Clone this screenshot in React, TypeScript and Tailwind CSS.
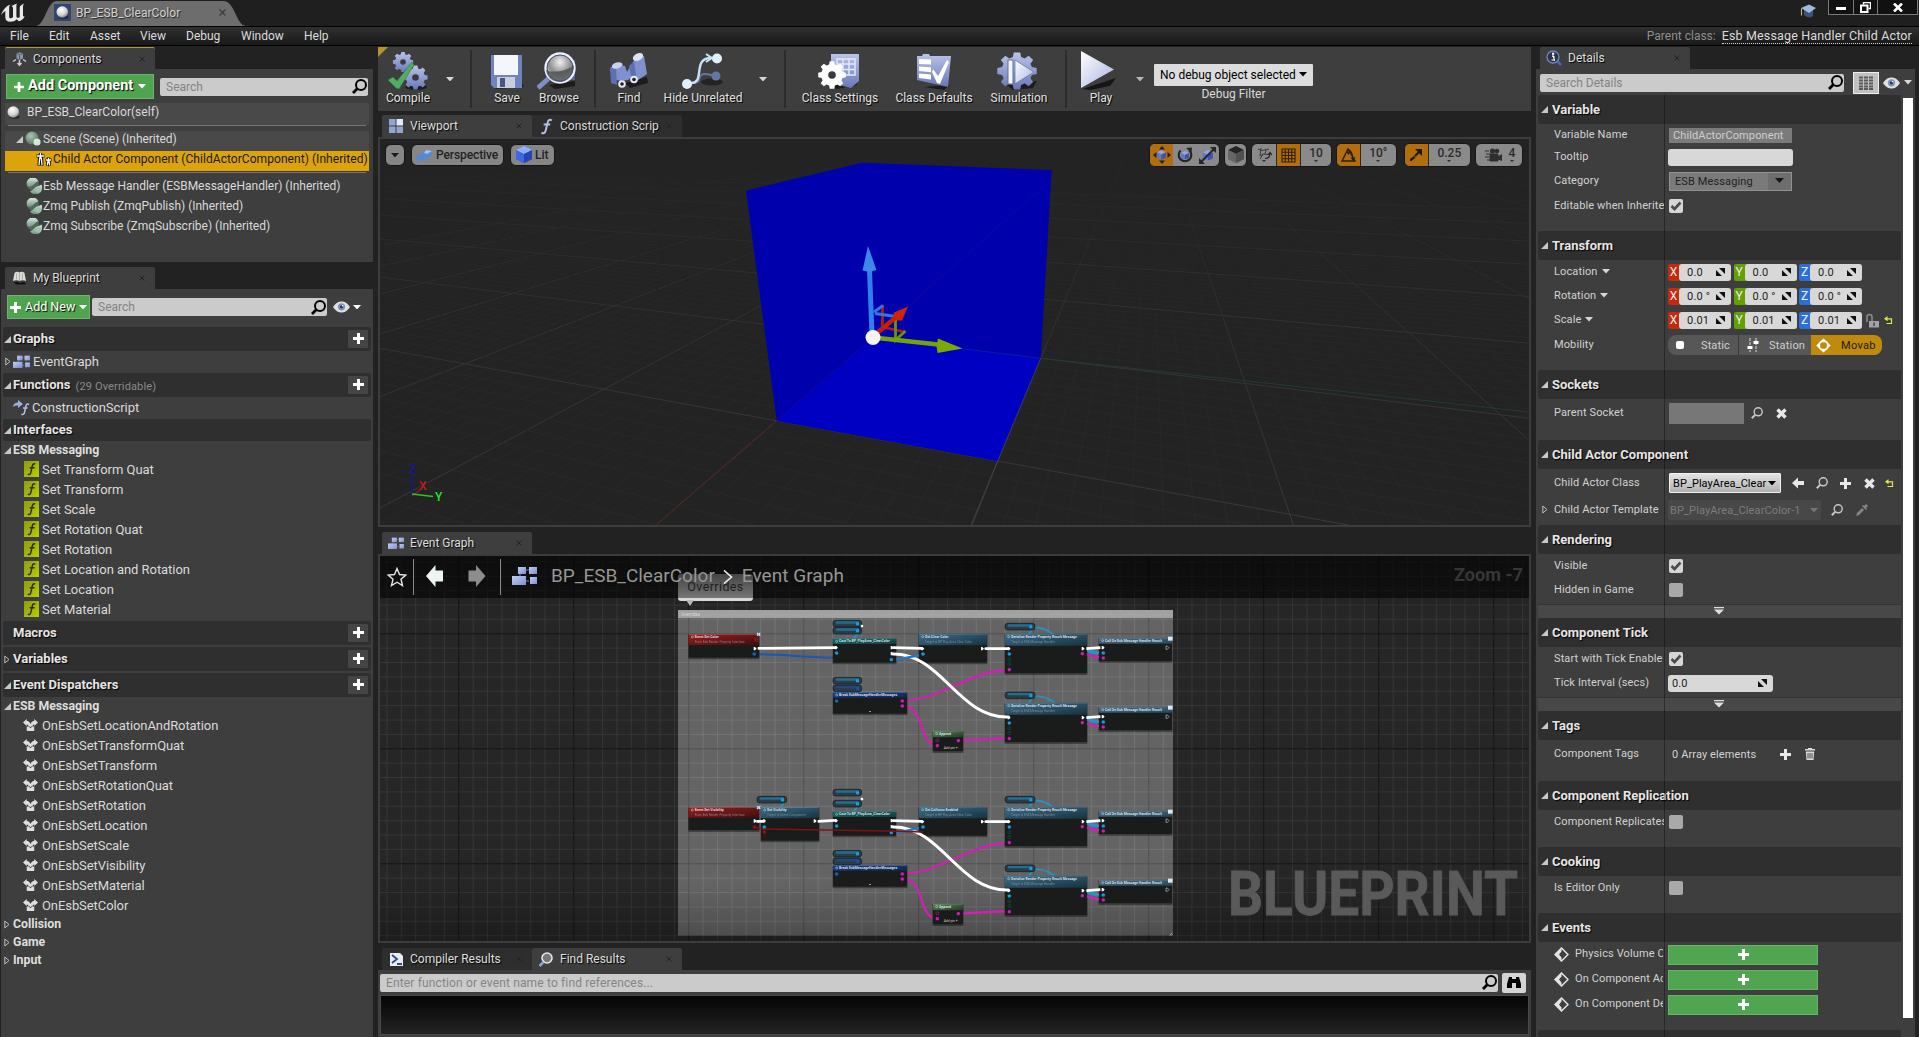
import React from "react";

type Kids = { children?: React.ReactNode };

const shadow = "[text-shadow:1px_1px_1px_#000]";

/* ---------- small glyphs ---------- */

const Caret = ({ c = "#d8d8d8", w = 9 }: { c?: string; w?: number }) => (
  <svg width={w} height={w * 0.56} viewBox="0 0 9 5" className="shrink-0">
    <path d="M0 0h9L4.5 5z" fill={c} />
  </svg>
);

const Open = () => (
  <svg width="7" height="7" viewBox="0 0 7 7" className="shrink-0">
    <path d="M7 0v7H0z" fill="#c8c8c8" />
  </svg>
);

const Closed = () => (
  <svg width="6" height="9" viewBox="0 0 6 9" className="shrink-0">
    <path d="M.8 1v7L5 4.5z" fill="none" stroke="#bdbdbd" />
  </svg>
);

const Plus = ({ s = 11, c = "#fff" }: { s?: number; c?: string }) => (
  <svg width={s} height={s} viewBox="0 0 11 11" className="shrink-0">
    <path d="M4 0h3v4h4v3H7v4H4V7H0V4h4z" fill={c} />
  </svg>
);

const Cross = ({ s = 11 }: { s?: number }) => (
  <svg width={s} height={s} viewBox="0 0 11 11" className="shrink-0">
    <path d="M1.5 1.5l8 8M9.5 1.5l-8 8" stroke="#e8e8e8" strokeWidth="3.4" />
  </svg>
);

const Glass = ({ s = 15, c = "#000", sw = 2 }: { s?: number; c?: string; sw?: number }) => (
  <svg width={s} height={s} viewBox="0 0 15 15" className="shrink-0">
    <circle cx="9" cy="6" r="5" fill="none" stroke={c} strokeWidth={sw} />
    <path d="M5.2 9.8L1 14" stroke={c} strokeWidth={sw * 1.4} />
  </svg>
);

const Eye = () => (
  <svg width="17" height="12" viewBox="0 0 17 12" className="shrink-0">
    <path d="M0 6C3 1.5 6 .5 8.500 .5S14 1.500 17 6c-3 4.500-6 5.500-8.500 5.500S3 10.500 0 6z" fill="#dfe0e6" />
    <circle cx="8.500" cy="5.800" r="3.600" fill="#7f92b8" />
    <circle cx="8.500" cy="5.800" r="1.600" fill="#28344f" />
    <circle cx="9.500" cy="4.800" r=".8" fill="#fff" />
  </svg>
);

const GraphIcon = ({ w = 17 }: { w?: number }) => (
  <svg width={w} height={w * 0.8} viewBox="0 0 25 20" className="shrink-0">
    <defs>
      <linearGradient id="gi" x1="0" y1="0" x2="1" y2="1">
        <stop offset="0" stopColor="#c3cdf2" />
        <stop offset="1" stopColor="#7f8fcf" />
      </linearGradient>
    </defs>
    <path d="M12 4h5M12 15h5M8 8v3" stroke="#7080b8" />
    <rect x="6" y="1" width="8" height="7" fill="url(#gi)" />
    <rect x="17" y="1" width="8" height="7" fill="url(#gi)" />
    <rect x="0" y="10" width="14" height="9" fill="url(#gi)" />
    <rect x="18" y="11" width="7" height="7" fill="url(#gi)" />
  </svg>
);

const FnTile = () => (
  <svg width="15" height="16" viewBox="0 0 15 16" className="shrink-0">
    <defs>
      <linearGradient id="ft" x1="0" y1="0" x2="1" y2="1">
        <stop offset="0" stopColor="#8f9a12" />
        <stop offset="1" stopColor="#b9cf00" />
      </linearGradient>
    </defs>
    <rect width="15" height="16" fill="url(#ft)" />
    <path d="M11.300 3.200C9.500 2 8.600 3.400 8.200 5.300L6.800 11.600C6.400 13.500 5.400 14 3.900 13.100M5.600 6.700h5" fill="none" stroke="#2c3004" strokeWidth="1.500" />
  </svg>
);

const FnIcon = ({ s = 16 }: { s?: number }) => (
  <svg width={s} height={s} viewBox="0 0 16 16" className="shrink-0">
    <path d="M13 2.300C10.800.6 9.600 2 9 4.600L7.300 11.500C6.700 14.200 5.400 15 3.300 13.900M5.300 6.200h6.200" fill="none" stroke="#b4c0ea" strokeWidth="1.900" />
  </svg>
);

const Dispatcher = () => (
  <svg width="15" height="12" viewBox="0 0 14 11" className="shrink-0">
    <path d="M0 3.200L3.500 0v1.500C5.600 1.800 6.500 3 7 4.600 7.500 3 8.400 1.800 10.500 1.500V0L14 3.200 10.500 6.400V5C9.500 5 9 5.800 8.700 6.800h1.800V11h-7V6.800h1.800C5 5.800 4.500 5 3.500 5v1.400z" fill="#dedede" />
    <path d="M5.600 6.600L7 8.200l1.400-1.600" fill="none" stroke="#3e3e3e" strokeWidth=".9" />
  </svg>
);

const Ball = ({ s = 13 }: { s?: number }) => (
  <svg width={s} height={s} viewBox="0 0 13 13" className="shrink-0">
    <defs>
      <radialGradient id="ball" cx=".4" cy=".3" r=".75">
        <stop offset="0" stopColor="#fff" />
        <stop offset=".6" stopColor="#d4d4d4" />
        <stop offset="1" stopColor="#777" />
      </radialGradient>
    </defs>
    <ellipse cx="7.500" cy="11" rx="5" ry="1.800" fill="#1a1a1a" opacity=".7" />
    <circle cx="6.300" cy="6" r="5.800" fill="url(#ball)" />
  </svg>
);

const SceneIcon = () => (
  <svg width="17" height="16" viewBox="0 0 17 16" className="shrink-0">
    <defs>
      <radialGradient id="sc" cx=".4" cy=".35" r=".7">
        <stop offset="0" stopColor="#a9c8b2" />
        <stop offset="1" stopColor="#557262" />
      </radialGradient>
    </defs>
    <circle cx="7" cy="7" r="6.500" fill="url(#sc)" />
    <circle cx="12" cy="11" r="3.600" fill="#cdebd5" />
  </svg>
);

const CompIcon = () => (
  <svg width="16" height="16" viewBox="0 0 16 16" className="shrink-0">
    <defs>
      <linearGradient id="ci" x1="0" y1="0" x2="0" y2="1">
        <stop offset="0" stopColor="#dcebe0" />
        <stop offset="1" stopColor="#6f8f7c" />
      </linearGradient>
    </defs>
    <circle cx="7" cy="6.500" r="6" fill="#50685a" />
    <path d="M1 7.500A6 6 0 0 1 12.500 3.500C9 3.800 8.500 7 5 8.500 3 9.300 1.500 9 1 7.500z" fill="url(#ci)" />
    <path d="M15.300 6.500A6.200 6.200 0 0 1 4 13.200c3-.2 4-3.200 6.500-4.400 2-.9 4-.9 4.800-2.300z" fill="url(#ci)" />
    <circle cx="12.500" cy="12" r="2.800" fill="#9fc0ab" />
  </svg>
);

const ChildIcon = () => (
  <svg width="16" height="15" viewBox="0 0 16 15" className="shrink-0">
    <g fill="none" stroke="#111" strokeWidth="3.200">
      <path d="M.5 4h8M4.500 1v6M3 13.500l.5-7h2l.5 7" />
      <path d="M9.500 8h6M12.500 5.500v4M11.500 14l.5-5h1l.5 5" />
    </g>
    <g fill="none" stroke="#fff" strokeWidth="1.300">
      <path d="M.8 4h7.400M4.500 1v6M3 13l.7-7h1.600l.7 7" />
      <path d="M10 8h5M12.500 6v3M11.300 13.500l.8-5h.8l.8 5" />
    </g>
  </svg>
);

const DragIcon = () => (
  <svg width="9" height="8" viewBox="0 0 9 8" className="shrink-0">
    <path d="M3 0h6v6zM0 2v6h6z" fill="#111" />
  </svg>
);

const Reset = () => (
  <svg width="9" height="9" viewBox="0 0 9 9" className="shrink-0">
    <path d="M3.500 0L0 2.800l3.500 2.500z" fill="#e2e64a" />
    <path d="M2 2.800h5.500v4.700H2.500" fill="none" stroke="#e2e64a" strokeWidth="1.200" />
  </svg>
);

/* ---------- shared pieces ---------- */

const Tab = ({ icon, label, active = true, accent = false }: { icon: React.ReactNode; label: string; active?: boolean; accent?: boolean }) => (
  <div
    className={
      "flex h-[22px] w-[150px] shrink-0 items-center rounded-t-[2px] pl-[6px] pr-[10px] " +
      (active ? "bg-[#3e3e3e] " : "bg-[#2e2e2e] ") +
      (accent ? "border-t border-[#b09a28]" : "")
    }
  >
    <span className="flex w-[16px] shrink-0 items-center justify-center">{icon}</span>
    <span className={"ml-[6px] whitespace-nowrap text-[12px] text-[#dedede] " + shadow}>{label}</span>
    <svg width="6" height="6" viewBox="0 0 6 6" className="ml-auto shrink-0">
      <path d="M.5.5l5 5M5.500.5l-5 5" stroke="#222" strokeWidth="1" />
    </svg>
  </div>
);

const SearchBox = ({ text, cls }: { text: string; cls: string }) => (
  <div className={"flex h-[18px] items-center rounded-[2px] bg-[#cbcbcb] pl-[6px] pr-[1px] " + cls}>
    <span className="text-[12px] text-[#848484]">{text}</span>
    <span className="ml-auto flex">
      <Glass />
    </span>
  </div>
);

/* ---------- title and menu ---------- */

const TitleBar = () => (
  <div className="flex h-[26px] shrink-0 items-start bg-[#1f1f1f]">
    <svg width="24" height="22" viewBox="0 0 24 22" className="ml-[1px] mt-[2px] shrink-0">
      <path
        d="M0 13C2 8 6 3 9.500 2.500 8 4 8.200 5 8.200 7v8c0 1.500 1.800 1.700 3.800.2V6.500c0-1.500-.5-2-1.500-2.500C13 3 14.500 2 16 1.500c-.6 1.200-.6 2-.6 4v8.500c0 2 1.500 2.300 3.300 1.200V5.500c0-1.500 2.500-3.500 4.300-4-1 1.300-1 2.500-1 4v8.500c.5.500 1 .5 1.800.2-1.300 3-4 4.600-6 5.100l-2-2c-1.300 1.700-4 2.500-6.500 2.500-3 0-5-1.500-5-4.500V9C2.800 10 1.500 11 0 13z"
        fill="#e8e8e8"
      />
    </svg>
    <div className="relative ml-[11px] mt-[1px] h-[25px] w-[210px]">
      <svg width="210" height="25" viewBox="0 0 210 25" className="absolute inset-0">
        <path d="M0 25C9 24 11 1 20 0H188C199 1 200 24 210 25z" fill="#6d6d6d" />
      </svg>
      <div className="relative flex h-[23px] items-center pl-[18px]">
        <span className="flex h-[17px] w-[17px] items-center justify-center bg-[#33456f]">
          <Ball />
        </span>
        <span className="ml-[5px] text-[12px] tracking-[.05px] text-[#d2d2d2] [text-shadow:1px_1px_1px_#222]">BP_ESB_ClearColor</span>
        <svg width="7" height="7" viewBox="0 0 7 7" className="ml-auto mr-[20px]">
          <path d="M.5.5l6 6M6.500.5l-6 6" stroke="#3a3a3a" strokeWidth="1.200" />
        </svg>
      </div>
    </div>
    <svg width="18" height="17" viewBox="0 0 18 17" className="ml-auto mt-[4px] shrink-0">
      <path d="M4 6v5c3 3 7 3 9 1V6z" fill="#3f5378" />
      <path d="M1 4l8-3.500L16 4l-7 5z" fill="#9dbbe0" />
      <path d="M1.500 4.500v7" stroke="#c9a86a" strokeWidth="1.200" />
    </svg>
    <div className="ml-[10px] mr-[1px] flex h-[15px] border border-t-0 border-[#7a7a7a]">
      <span className="flex w-[25px] items-center justify-center border-r border-[#7a7a7a] bg-[#111]">
        <span className="mt-[2px] h-[3px] w-[10px] bg-white" />
      </span>
      <span className="flex w-[24px] items-center justify-center border-r border-[#7a7a7a] bg-[#111]">
        <svg width="11" height="11" viewBox="0 0 11 11">
          <path d="M3.500 2.500v-2h7v6h-2" fill="none" stroke="#fff" strokeWidth="1.400" />
          <rect x="1" y="3.500" width="6.500" height="6.500" fill="none" stroke="#fff" strokeWidth="2" />
        </svg>
      </span>
      <span className="flex w-[39px] items-center justify-center bg-[#111]">
        <svg width="10" height="9" viewBox="0 0 10 9">
          <path d="M1 .5l8 8M9 .5l-8 8" stroke="#fff" strokeWidth="2.600" />
        </svg>
      </span>
    </div>
  </div>
);

const menu: [string, string][] = [
  ["File", "w-[39px]"],
  ["Edit", "w-[41px]"],
  ["Asset", "w-[50px]"],
  ["View", "w-[46px]"],
  ["Debug", "w-[55px]"],
  ["Window", "w-[63px]"],
  ["Help", "w-[40px]"],
];

const MenuBar = () => (
  <div className="flex h-[20px] shrink-0 items-center border-y border-black bg-gradient-to-b from-[#303030] to-[#191919] pl-[10px] pr-[7px] text-[12px] text-[#dcdcdc]">
    {menu.map(([m, w]) => (
      <span key={m} className={w}>
        {m}
      </span>
    ))}
    <span className="ml-auto text-[12px] text-[#8f8f8f]">Parent class:</span>
    <span className="ml-[6px] border-b border-dotted border-[#cfcfcf] text-[12.500px] leading-[14px] tracking-[.15px]">Esb Message Handler Child Actor</span>
  </div>
);

/* ---------- left column ---------- */

const Components = () => (
  <div className="flex flex-col">
    <div className="flex pl-[5px]">
      <Tab
        accent
        label="Components"
        icon={
          <svg width="15" height="14" viewBox="0 0 15 14">
            <path d="M4.500 1.500l3-1.200 3.500 1v5.200L7.500 8 4.500 6.500z" fill="#8b95a6" />
            <path d="M1 9.500l3-2M14 9.500l-3-2M7.500 8v5M5.500 11l2 2.300 2-2.300" stroke="#c8ccd6" strokeWidth="1.500" fill="none" />
            <path d="M4.500 1.500l3 1 3.500-1.200M7.500 2.500V8" stroke="#4a5468" strokeWidth=".8" fill="none" />
          </svg>
        }
      />
    </div>
    <div className="ml-[1px] h-[193px] w-[372px] bg-[#3e3e3e] px-[4px] pt-[5px]">
      <div className="flex items-center">
        <div className="ml-px flex h-[25px] w-[148px] items-center border border-[#6cb56c] bg-[#50a450] pl-[7px]">
          <Plus s={10} />
          <span className={"ml-[4px] whitespace-nowrap text-[14.500px] font-bold text-white " + shadow}>Add Component</span>
          <span className="ml-[5px] flex">
            <Caret c="#fff" w={8} />
          </span>
        </div>
        <SearchBox text="Search" cls="ml-[6px] w-[208px]" />
      </div>
      <div className="mt-[4px] flex h-[22px] items-center bg-[#494949] pl-[2px] pb-[4px] text-[12px] tracking-[.03px] text-[#dadada]">
        <Ball />
        <span className="ml-[7px]">BP_ESB_ClearColor(self)</span>
      </div>
      <div className="mx-[3px] h-px bg-[#767676]" />
      <div className="mt-[5px] flex h-[20px] items-center bg-[#494949] pb-[4px] pl-[11px] text-[12px] text-[#dadada]">
        <Open />
        <span className="ml-[2px] flex">
          <SceneIcon />
        </span>
        <span className="ml-px tracking-[-.05px]">Scene (Scene) (Inherited)</span>
      </div>
      <div className="flex h-[20px] w-[364px] items-center bg-[#dca30a] pb-[4px] pl-[31px] text-[12px] tracking-[.055px] text-[#181818]">
        <ChildIcon />
        <span className="ml-px whitespace-nowrap">Child Actor Component (ChildActorComponent) (Inherited)</span>
      </div>
      <div className="mx-[3px] mt-px mb-[3px] h-px bg-[#767676]" />
      {["Esb Message Handler (ESBMessageHandler) (Inherited)", "Zmq Publish (ZmqPublish) (Inherited)", "Zmq Subscribe (ZmqSubscribe) (Inherited)"].map((t) => (
        <div key={t} className="flex h-[20px] items-center pl-[21px] text-[12px] tracking-[-.01px] text-[#dadada]">
          <CompIcon />
          <span className="ml-px whitespace-nowrap">{t}</span>
        </div>
      ))}
    </div>
  </div>
);

const Header = ({ label, h = "h-[24px]", arrow, plus = true, note }: { label: string; h?: string; arrow?: React.ReactNode; plus?: boolean; note?: string }) => (
  <div className={"flex items-center rounded-[2px] bg-[#2f2f2f] pl-px pr-[3px] " + h}>
    <span className="flex w-[9px] items-center">{arrow}</span>
    <span className={"pb-px text-[13px] font-bold text-[#e6e6e6] " + shadow}>{label}</span>
    {note && <span className="ml-[5px] pt-[2px] text-[11px] tracking-[.15px] text-[#8a8a8a]">{note}</span>}
    {plus && (
      <span className="mb-px ml-auto flex h-[18px] w-[20px] items-center justify-center rounded-[1px] bg-[#454545]">
        <Plus />
      </span>
    )}
  </div>
);

const Sub = ({ label, open, h }: { label: string; open?: boolean; h: string }) => (
  <div className={"flex items-center pl-px " + h}>
    <span className="flex w-[9px] items-center">{open ? <Open /> : <Closed />}</span>
    <span className="text-[12.300px] font-bold text-[#dedede]">{label}</span>
  </div>
);

const fns = ["Set Transform Quat", "Set Transform", "Set Scale", "Set Rotation Quat", "Set Rotation", "Set Location and Rotation", "Set Location", "Set Material"];
const evs = [
  "OnEsbSetLocationAndRotation",
  "OnEsbSetTransformQuat",
  "OnEsbSetTransform",
  "OnEsbSetRotationQuat",
  "OnEsbSetRotation",
  "OnEsbSetLocation",
  "OnEsbSetScale",
  "OnEsbSetVisibility",
  "OnEsbSetMaterial",
  "OnEsbSetColor",
];

const MyBlueprint = () => (
  <div className="mt-[5px] flex min-h-0 grow flex-col">
    <div className="flex pl-[5px]">
      <Tab
        label="My Blueprint"
        icon={
          <svg width="15" height="14" viewBox="0 0 15 14">
            <path d="M1 10L2.500 2C4 .5 6 .5 7.500 1.500 9 .5 11 .5 12.500 2L14 10c-2-1-5-1-6.500 0C6 9 3 9 1 10z" fill="#dcdcd6" />
            <path d="M2 11.500c2-1 4-1 5.500.5 2-1 4-1 6-.500v2H4z" fill="#111" />
            <path d="M7.500 2v8M4.500 2.500v6M10.500 2.500v6" stroke="#9f9f9f" strokeWidth=".8" />
          </svg>
        }
      />
    </div>
    <div className="ml-[1px] w-[372px] grow bg-[#3e3e3e] px-[2px] pt-[6px]">
      <div className="flex h-[24px] items-center">
        <div className="ml-[4px] flex h-[24px] w-[83px] items-center border border-[#6cb56c] bg-[#50a450] pl-[2px]">
          <Plus />
          <span className={"ml-[4px] whitespace-nowrap text-[12.500px] text-white " + shadow}>Add New</span>
          <span className="ml-[4px] flex">
            <Caret c="#fff" w={8} />
          </span>
        </div>
        <SearchBox text="Search" cls="ml-[2px] w-[235px]" />
        <span className="ml-[6px] flex">
          <Eye />
        </span>
        <span className="ml-[3px] flex">
          <Caret c="#fff" w={8} />
        </span>
      </div>
      <div className="mt-[8px] w-[368px]">
        <Header label="Graphs" arrow={<Open />} />
        <div className="flex h-[22px] items-center pb-px pl-[2px] text-[13px] tracking-[-.05px] text-[#dadada]">
          <span className="flex w-[8px]">
            <Closed />
          </span>
          <GraphIcon />
          <span className="ml-[3px]">EventGraph</span>
        </div>
        <Header label="Functions" arrow={<Open />} note="(29 Overridable)" />
        <div className="flex h-[22px] items-center pb-px pl-[10px] text-[13px] tracking-[-.05px] text-[#dadada]">
          <svg width="17" height="16" viewBox="0 0 17 16">
            <path d="M0 7C.5 3.500 3 2.500 5 2.500V0l5 4-5 4V5.500C3 5.500 1.500 5.800 0 7z" fill="#9fb0dc" />
            <path d="M16 4.500c-2-1.200-2.800.2-3.200 2l-1.200 5.500c-.5 2.200-1.500 3-3.200 2.200M10 8h4.500" fill="none" stroke="#b4c0ea" strokeWidth="1.500" />
          </svg>
          <span className="ml-[2px]">ConstructionScript</span>
        </div>
        <Header label="Interfaces" h="h-[22px]" arrow={<Open />} plus={false} />
        <Sub label="ESB Messaging" open h="h-[18px]" />
        {fns.map((f) => (
          <div key={f} className="flex h-[20px] items-center pl-[21px] text-[13px] tracking-[-.05px] text-[#dadada]">
            <FnTile />
            <span className="ml-[3px]">{f}</span>
          </div>
        ))}
        <div className="mt-[2px] flex flex-col gap-[2px]">
          <Header label="Macros" />
          <Header label="Variables" arrow={<Closed />} />
          <Header label="Event Dispatchers" arrow={<Open />} />
        </div>
        <Sub label="ESB Messaging" open h="h-[18px]" />
        {evs.map((f) => (
          <div key={f} className="flex h-[20px] items-center pl-[20px] text-[13px] tracking-[-.08px] text-[#dadada]">
            <Dispatcher />
            <span className="ml-[4px]">{f}</span>
          </div>
        ))}
        <Sub label="Collision" h="h-[18px]" />
        <Sub label="Game" h="h-[18px]" />
        <Sub label="Input" h="h-[18px]" />
      </div>
    </div>
  </div>
);

/* ---------- toolbar ---------- */

const gear = "M-2-10h4l.6 3 2.200.9 2.500-1.700 2.800 2.800-1.700 2.500.9 2.200 3 .6v4l-3 .6-.9 2.200 1.700 2.500-2.800 2.800-2.500-1.700-2.200.9-.6 3h-4l-.6-3-2.200-.9-2.500 1.700-2.800-2.800 1.700-2.500-.9-2.200-3-.6v-4l3-.6.9-2.200-1.700-2.500 2.800-2.800 2.500 1.700 2.200-.9z";

const Gear = ({ x, y, s, f }: { x: number; y: number; s: number; f: string }) => (
  <g transform={`translate(${x} ${y}) scale(${s})`}>
    <path d={gear} transform="translate(0 -2.300)" fill={f} />
    <circle r="3.400" fill="#3a3a3a" />
  </g>
);

const Defs = () => (
  <defs>
    <linearGradient id="bl" x1="0" y1="0" x2="0" y2="1">
      <stop offset="0" stopColor="#b9c4ea" />
      <stop offset="1" stopColor="#6878b6" />
    </linearGradient>
    <linearGradient id="wh" x1="0" y1="0" x2="1" y2="1">
      <stop offset="0" stopColor="#ffffff" />
      <stop offset="1" stopColor="#a9b4e0" />
    </linearGradient>
    <radialGradient id="lens" cx=".5" cy=".3" r=".7">
      <stop offset="0" stopColor="#f2f2f2" />
      <stop offset=".55" stopColor="#8d8d8d" />
      <stop offset="1" stopColor="#e6e6e6" />
    </radialGradient>
  </defs>
);

const Tool = ({ label, w, children }: { label: string; w: string } & Kids) => (
  <div className={"flex h-[63px] shrink-0 flex-col items-center pt-[3px] " + w}>
    <svg width="44" height="40" viewBox="0 0 44 40" className="shrink-0">
      <Defs />
      {children}
    </svg>
    <span className={"whitespace-nowrap text-[12px] leading-[14px] text-[#e2e2e2] " + shadow}>{label}</span>
  </div>
);

const Sep = ({ m }: { m: string }) => <div className={"h-[58px] w-[2px] shrink-0 bg-[#2c2c2c] " + m} />;

const Toolbar = () => (
  <div className="relative flex h-[64px] shrink-0 items-center bg-[#3e3e3e]">
    <svg width="10" height="10" className="absolute left-0 top-0">
      <path d="M0 0h10L0 10z" fill="#b8922a" />
    </svg>
    <Tool label="Compile" w="w-[60px]">
      <ellipse cx="30" cy="36" rx="11" ry="3" fill="#1e1e1e" />
      <Gear x={17} y={11} s={0.82} f="url(#bl)" />
      <Gear x={29.500} y={26.500} s={0.98} f="url(#bl)" />
      <path d="M2 29l5-3 4 4 15-19 2 3-15 24-3-1z" fill="#4fae62" stroke="#2d6e3c" strokeWidth=".5" />
    </Tool>
    <span className="flex w-[24px] justify-center">
      <Caret w={8} />
    </span>
    <Sep m="ml-[8px]" />
    <Tool label="Save" w="ml-[9px] w-[52px]">
      <path d="M36 30l3 6-30 2z" fill="#1e1e1e" />
      <path d="M6 4h31v33H9l-3-3z" fill="#6f83be" />
      <rect x="9" y="4" width="24" height="20" fill="#f4f6fb" />
      <rect x="12" y="26" width="18" height="11" fill="#c9cddd" />
      <rect x="15" y="27" width="5" height="9" fill="#4a5682" />
    </Tool>
    <Tool label="Browse" w="w-[52px]">
      <path d="M12 34l26-4v5l-20 3z" fill="#1c1c1c" />
      <path d="M9 9h29v20H9z" fill="#56638c" />
      <path d="M11 28L1 37" stroke="#7f90c4" strokeWidth="5" />
      <circle cx="23" cy="17" r="14.500" fill="url(#lens)" stroke="#eef1fb" strokeWidth="2.400" />
      <path d="M9 19c6 3 20 2 28-5 0 9-6 17-14 17S10 26 9 19z" fill="#4a4a4a" opacity=".75" />
      <circle cx="23" cy="17" r="13" fill="none" stroke="#41507e" />
    </Tool>
    <Sep m="ml-[9px]" />
    <Tool label="Find" w="ml-[9px] w-[48px]">
      <path d="M18 32l22-6 1 6-18 5z" fill="#1c1c1c" />
      <path d="M3 17l7-4 8 2 2 6 4-7 5-8 8-1 3 18-9 6-6-3-4 3-7 1-9-2z" fill="#7f92cf" />
      <path d="M3 17l1 15 6 2-1-18zM22 15l3 14 5 1-3-20z" fill="#5d70b2" />
      <ellipse cx="10" cy="14.500" rx="5.500" ry="3" fill="#c8d2f2" transform="rotate(-15 10 14)" />
      <ellipse cx="31" cy="6" rx="5.500" ry="3.500" fill="#dfe3ee" transform="rotate(-25 31 6)" />
      <circle cx="15" cy="33" r="3.800" fill="#e4e8f4" />
      <circle cx="15" cy="33" r="1.800" fill="#222" />
      <circle cx="27" cy="28.500" r="3.800" fill="#e4e8f4" />
      <circle cx="27" cy="28.500" r="1.800" fill="#222" />
    </Tool>
    <Tool label="Hide Unrelated" w="ml-[2px] w-[96px]">
      <ellipse cx="31" cy="31" rx="11" ry="3.500" fill="#242424" />
      <path d="M10 32c14 0 4-9 14-9s6 3 12 3" stroke="#66779f" strokeWidth="2" fill="none" />
      <circle cx="35" cy="25" r="4.500" fill="#5f78a6" />
      <path d="M8 32c18 2 2-25 22-25" stroke="#c9e2fa" strokeWidth="2.400" fill="none" />
      <path d="M25 3l6 4-6 4" stroke="#c9e2fa" strokeWidth="2" fill="none" />
      <circle cx="36" cy="7.500" r="5" fill="#dff1ff" />
      <circle cx="6" cy="33" r="5" fill="#dff1ff" />
    </Tool>
    <span className="flex w-[24px] justify-center">
      <Caret w={8} />
    </span>
    <Sep m="ml-[9px]" />
    <Tool label="Class Settings" w="ml-[7px] w-[94px]">
      <path d="M14 34l24-4 1 4-20 4z" fill="#1c1c1c" />
      <path d="M13 3h28v27l-8 7-20-5z" fill="url(#bl)" />
      <path d="M19 8h18v16H19zM25 8v16M31 8v16M19 13h18M19 18.500h18" fill="none" stroke="#e5eaf8" strokeWidth="1.400" />
      <Gear x={14} y={24} s={1.12} f="#fff" />
    </Tool>
    <Tool label="Class Defaults" w="w-[94px]">
      <path d="M12 36l26-2-6 5z" fill="#1c1c1c" />
      <path d="M5 5h5l1-2h6l1 2h21l-3 31L5 29z" fill="url(#bl)" />
      <path d="M7 8l12 .500v5L7 13zM7 15.500l12 .700v5L7 20zM7 22.500l12 1v5L7 27z" fill="#fff" />
      <path d="M21 18l5 7 9-16 2 2-9 22-3-1-5-11z" fill="#fff" />
    </Tool>
    <Tool label="Simulation" w="w-[76px]">
      <path d="M10 34l30-4-4 7-20 2z" fill="#1c1c1c" />
      <g transform="translate(20 20) scale(1.600 1.500)">
        <path d={gear} transform="translate(0 -2.300)" fill="url(#bl)" />
      </g>
      <rect x="11" y="9" width="5" height="24" fill="#f4f6fb" stroke="#60709c" />
      <path d="M18 9l19 12-19 12z" fill="url(#wh)" stroke="#60709c" strokeWidth=".7" />
    </Tool>
    <Sep m="ml-[8px]" />
    <Tool label="Play" w="ml-[5px] w-[58px]">
      <path d="M3 38l34-11-6 8-20 4z" fill="#161616" />
      <path d="M2 0v37l33-18.500z" fill="url(#wh)" />
    </Tool>
    <span className="flex w-[20px] justify-center">
      <Caret c="#b8b8b8" w={8} />
    </span>
    <div className="ml-[4px] flex flex-col items-center pt-[6px]">
      <div className="flex h-[22px] w-[159px] items-center rounded-[1px] bg-[#dcdcdc] pl-[6px] text-[12px] text-black">
        <span className="whitespace-nowrap">No debug object selected</span>
        <span className="ml-[3px] flex">
          <Caret c="#000" w={8} />
        </span>
      </div>
      <span className="mt-[1px] text-[12px] leading-[14px] text-[#dadada]">Debug Filter</span>
    </div>
  </div>
);

/* ---------- viewport ---------- */

const P = (u: number, v: number): [number, number] => {
  const w = 1 - 0.2587 * u - 0.0903 * v;
  return [(-297.2 * u + 73.7 * v + 873) / w, (-25.8 * u - 11.75 * v + 337.7) / w];
};

type Seg = { a: [number, number]; b: [number, number]; major: boolean };
const segs: Seg[] = [];
for (let i = -60; i <= 100; i++) {
  const v = i / 10;
  segs.push({ a: P(-40, v), b: P((0.94 - 0.0903 * v) / 0.2587, v), major: i % 10 === 0 });
}
for (let i = -60; i <= 36; i++) {
  const u = i / 10;
  segs.push({ a: P(u, -40), b: P(u, (0.94 - 0.2587 * u) / 0.0903), major: i % 10 === 0 });
}

const pill = "flex h-[22px] items-center rounded-[6px] border border-[#151515] bg-[#868686]";

const Scene = () => (
  <svg viewBox="380 139 1149 386" className="absolute inset-0 h-full w-full">
    <defs>
      <linearGradient id="fade" x1="0" y1="0" x2="0" y2="1">
        <stop offset="0" stopColor="#fff" stopOpacity=".05" />
        <stop offset=".12" stopColor="#fff" stopOpacity=".2" />
        <stop offset=".5" stopColor="#fff" stopOpacity=".7" />
        <stop offset="1" stopColor="#fff" />
      </linearGradient>
      <mask id="fm">
        <rect x="380" y="139" width="1149" height="386" fill="url(#fade)" />
      </mask>
    </defs>
    <rect x="380" y="139" width="1149" height="386" fill="#232323" />
    <g mask="url(#fm)">
      {segs.map((s, i) => (
        <line key={i} x1={s.a[0]} y1={s.a[1]} x2={s.b[0]} y2={s.b[1]} stroke={s.major ? "#3a3a3a" : "#2b2b2b"} strokeWidth={s.major ? 1 : 0.8} />
      ))}
    </g>
    <path d="M746 190.700L861.700 162.700 1051.700 170 1040.700 358.300 997.700 461 776.700 420.700z" fill="#0000ad" />
    <path d="M873 337.700L1040.700 358.300 997.700 461 776.700 420.700z" fill="#0000c3" />
    <path d="M776.700 420.700L873 337.700 1051 180" fill="none" stroke="#1e0a8c" strokeWidth=".7" />
    <path d="M776.700 420.700L656 525" stroke="#5a2424" strokeWidth=".9" />
    <path d="M873 337.700L1040.700 358.300" stroke="#082a9a" strokeWidth=".7" />
    <path d="M1040.700 358.300L1529 412" stroke="#25402a" strokeWidth=".9" />
    <path d="M1040.700 358.300L997.700 461 972 525" stroke="#45484c" strokeWidth=".8" fill="none" />
    <g fill="none" strokeWidth="2.800">
      <path d="M882.500 305v22l22 5" stroke="#b81c05" />
      <path d="M874 312l9-6.500M875 313.500l21 3" stroke="#2f78e0" />
      <path d="M895.500 317v23l10-9" stroke="#6c9400" />
    </g>
    <path d="M876 334l20-17" stroke="#c02004" strokeWidth="4.500" />
    <path d="M894 312.500l14-6-6 14-5 0-4-4z" fill="#d02505" />
    <path d="M872 335l-2.500-65" stroke="#2f80ea" strokeWidth="5" />
    <path d="M868 246l8.500 24-7 2-7-1.500z" fill="#3b87ea" />
    <path d="M878 338l60 6.500" stroke="#76a207" strokeWidth="4.500" />
    <path d="M938 338.500l24.500 10-25 4.500-1-7z" fill="#7ea80a" />
    <circle cx="873" cy="337.500" r="7.500" fill="#f4f4f4" />
    <path d="M412 496V476" stroke="#1414a0" strokeWidth="1.500" />
    <path d="M412 496l9-7" stroke="#a01818" strokeWidth="1.500" />
    <path d="M412 494l21 2.500" stroke="#28c828" strokeWidth="1.500" />
    <g fontFamily="Roboto, sans-serif" fontSize="12" fontWeight="500">
      <text x="409" y="474" fill="#1616a8">Z</text>
      <text x="419" y="490" fill="#c01c1c">X</text>
      <text x="435" y="501" fill="#30e030">Y</text>
    </g>
  </svg>
);

const VBtn = ({ w, on, children, first, val }: { w: string; on?: boolean; first?: boolean; val?: string } & Kids) => (
  <span className={"relative flex h-full items-center justify-center " + w + (on ? " bg-[#b26d0e]" : "") + (first ? "" : " border-l border-[#2a2a2a]")}>
    {val && <span className="pb-[5px] text-[12px] font-medium text-[#2a2a2a]">{val}</span>}
    {children}
    {val && (
      <span className="absolute bottom-[4px] flex">
        <Caret c="#333" w={4} />
      </span>
    )}
  </span>
);

const VGroup = ({ m, children }: { m: string } & Kids) => (
  <div className={"flex h-[24px] items-center overflow-hidden rounded-[6px] border border-[#161616] bg-[#8a8a8a] " + m}>{children}</div>
);

const Cube = ({ s = 9, a = "#8fa4ea", b = "#5d76cf", c = "#3c54b0" }: { s?: number; a?: string; b?: string; c?: string }) => (
  <svg width={s} height={s * 1.08} viewBox="0 0 12 13" className="shrink-0">
    <path d="M0 3l6-3 6 3-6 3z" fill={a} />
    <path d="M0 3l6 3v7L0 10z" fill={b} />
    <path d="M12 3L6 6v7l6-3z" fill={c} />
  </svg>
);

const Viewport = () => (
  <div className="relative h-[390px] shrink-0 border-2 border-[#3c3c3c] bg-[#232323]">
    <Scene />
    <div className="relative flex items-start pl-[5px] pr-[6px] pt-[4px]">
      <div className={pill + " mt-px w-[20px] justify-center"}>
        <Caret c="#1c1c1c" w={8} />
      </div>
      <div className={pill + " ml-[6px] mt-px w-[93px] gap-[4px] pl-[5px]"}>
        <svg width="15" height="12" viewBox="0 0 15 12" className="shrink-0">
          <path d="M0 7l7-3 2-3 6 1-1 5-5 2-4 3-5-1z" fill="#4d8ae0" />
          <path d="M9 1l6 1-5 3-3-1z" fill="#9cc4f8" />
        </svg>
        <span className="text-[12px] font-medium tracking-[-.1px] text-[#222]">Perspective</span>
      </div>
      <div className={pill + " ml-[6px] mt-px w-[45px] gap-[3px] pl-[5px]"}>
        <Cube s={16} a="#8db0ff" b="#3f66e6" c="#2743b8" />
        <span className="text-[12px] font-medium text-[#222]">Lit</span>
      </div>
      <VGroup m="ml-auto w-[71px]">
        <VBtn w="w-[23px]" on first>
          <svg width="18" height="18" viewBox="0 0 18 18" className="absolute">
            <path d="M9 0l3 3.500H6zM9 18l3-3.500H6zM0 9l3.500-3v6zM18 9l-3.500-3v6z" fill="#222" />
          </svg>
          <Cube />
        </VBtn>
        <VBtn w="w-[23px]" first>
          <svg width="16" height="16" viewBox="0 0 16 16" className="absolute">
            <path d="M3.500 3.500a6.300 6.300 0 1 0 9 0" fill="none" stroke="#262626" strokeWidth="2.200" />
            <path d="M9 1l6-.5-.5 5.500z" fill="#262626" />
          </svg>
          <Cube s={8} />
        </VBtn>
        <VBtn w="w-[23px]" first>
          <svg width="17" height="17" viewBox="0 0 17 17" className="absolute">
            <path d="M17 0v6L11 0zM0 17v-6l6 6z" fill="#262626" />
            <path d="M2 15L15 2" stroke="#262626" strokeWidth="2" />
          </svg>
          <Cube s={10} />
        </VBtn>
      </VGroup>
      <VGroup m="ml-[4px] w-[23px] justify-center">
        <Cube s={16} a="#242424" b="#666" c="#505050" />
      </VGroup>
      <VGroup m="ml-[4px] w-[81px]">
        <VBtn w="w-[24px]" first>
          <svg width="15" height="14" viewBox="0 0 15 14" className="mb-[3px]">
            <path d="M1 2l4 1.500L12 2M4 1L3 9l3-2 6 .5M6 7L3 12M9 3L8 7.500" fill="none" stroke="#3a3a3a" />
            <path d="M8 11.500c3 0 5-2 5-5M11 8l2-2.500L15 8" fill="none" stroke="#222" strokeWidth="1.200" />
          </svg>
          <span className="absolute bottom-[4px] flex">
            <Caret c="#333" w={4} />
          </span>
        </VBtn>
        <VBtn w="w-[24px]" on>
          <svg width="15" height="15" viewBox="0 0 15 15">
            <path d="M1 1h13v13H1zM4.250 1v13M7.500 1v13M10.750 1v13M1 4.250h13M1 7.500h13M1 10.750h13" fill="none" stroke="#2a2010" strokeWidth="1.100" />
          </svg>
        </VBtn>
        <VBtn w="w-[31px]" val="10" />
      </VGroup>
      <VGroup m="ml-[4px] w-[61px]">
        <VBtn w="w-[23px]" on first>
          <svg width="15" height="15" viewBox="0 0 15 15">
            <path d="M1 13h13L7 1zM7 1c3 2 5 6 5 11" fill="none" stroke="#2a2010" strokeWidth="1.400" />
            <path d="M9.500 9.500l5 0-2 4zM5 4l4-1-1 4z" fill="#2a2010" />
          </svg>
        </VBtn>
        <VBtn w="w-[37px]" val="10°" />
      </VGroup>
      <VGroup m="ml-[7px] w-[67px]">
        <VBtn w="w-[23px]" on first>
          <svg width="14" height="14" viewBox="0 0 14 14">
            <path d="M6 1h7v7zM5 8l1.500 1.500L2.500 13H1v-2z" fill="#1f180c" />
            <path d="M6 8l5-5" stroke="#1f180c" strokeWidth="2.200" />
          </svg>
        </VBtn>
        <VBtn w="w-[43px]" val="0.25" />
      </VGroup>
      <VGroup m="ml-[4px] w-[48px]">
        <VBtn w="w-[28px] pl-[6px]" first>
          <svg width="17" height="14" viewBox="0 0 17 14">
            <circle cx="7.500" cy="3" r="2.600" fill="#2e2e2e" />
            <circle cx="12" cy="3" r="2.300" fill="#2e2e2e" />
            <path d="M5 6h8v7H5zM13 9l4-2.500v6L13 11zM0 3h4M1 6h4M0 9h4M2 12h4" fill="#2e2e2e" stroke="#2e2e2e" />
          </svg>
        </VBtn>
        <VBtn w="w-[16px]" first val="4" />
      </VGroup>
    </div>
  </div>
);

/* ---------- graph ---------- */

type NodeT = [number, number, number, number, string, number, string, string?];

const Node = ({ n }: { n: NodeT }) => {
  const [x, y, w, h, color, hh, t, sub] = n;
  return (
    <g>
      <rect x={x - 2} y={y + 1} width={w + 4} height={h + 4} rx="4" fill="#000" opacity=".35" />
      <rect x={x} y={y} width={w} height={h} rx="3" fill="#191c1b" />
      <rect x={x} y={y} width={w} height={hh} rx="3" fill={`url(#${color})`} />
      <rect x={x + 1} y={y} width={w - 2} height="2" fill="#cfdde0" opacity=".35" />
      <circle cx={x + 11} cy={y + 9} r="3" fill="none" stroke="#dfe8ea" strokeWidth="1.500" />
      <text x={x + 18} y={y + 12} fontSize="10.500" fontWeight="bold" fill="#d5dde0">{t}</text>
      {sub && <text x={x + 18} y={y + 27} fontSize="9.500" fill="#90989a" opacity=".8">{sub}</text>}
    </g>
  );
};

const Pill = ({ x, y, w = 86, deep }: { x: number; y: number; w?: number; deep?: boolean }) => (
  <g>
    <rect x={x} y={y} width={w} height="20" rx="8" fill="#2c3c46" stroke="#10181c" strokeWidth="2" />
    <rect x={x + 8} y={y + 3} width={w - 16} height="7" rx="3" fill={deep ? "#1f4f9c" : "#1f81b4"} opacity=".7" />
    <rect x={x + w - 17} y={y + 6} width="9" height="9" fill={deep ? "#1d4bb0" : "#13a0e6"} />
  </g>
);

const Exec = ({ x, y, hollow }: { x: number; y: number; hollow?: boolean }) => (
  <path d={`M${x - 4} ${y - 5}h4l5 5-5 5h-4z`} fill={hollow ? "none" : "#fff"} stroke="#fff" strokeWidth={hollow ? 1.5 : 0} />
);

const Pin = ({ x, y, c, o }: { x: number; y: number; c: string; o?: boolean }) => (
  <rect x={x - 4} y={y - 4} width="8" height="8" rx="2" fill={o ? "none" : c} stroke={c} strokeWidth="1.500" />
);

const CY = "#13a0e6";
const MG = "#d021b4";

/* One chain of nodes, drawn d units further down. */
const Chain = ({ d, title, sub }: { d: number; title: string; sub: string }) => (
  <g>
    <g fill="none" strokeLinecap="round">
      <path d={`M1075 ${112 + d}c40 0 60 20 80 40M1070 ${122 + d}l-12 14M1075 ${318 + d}c40 0 60 15 80 35M1070 ${328 + d}l-12 14M556 ${122 + d}l-24 28`} stroke="#2594c8" strokeWidth="5" />
      <path d={`M1225 ${178 + d}c30 12 30 12 55 13M1225 ${384 + d}c30 12 30 12 55 13`} stroke="#2594c8" strokeWidth="7" />
      <path d={`M1225 ${191 + d}c30 6 30 12 55 14M1225 ${397 + d}c30 6 30 12 55 13M684 ${332 + d}C800 ${330 + d} 880 ${242 + d} 1000 ${240 + d}M684 ${348 + d}C750 ${348 + d} 730 ${465 + d} 785 ${467 + d}M850 ${452 + d}L1000 ${444 + d}`} stroke={MG} strokeWidth="7" />
    </g>
    <Node n={[474, 145 + d, 189, 73, "nTeal", 17, "Cast To BP_PlayArea_ClearColor"]} />
    <Node n={[474, 306 + d, 222, 65, "nNavy", 17, "Break EsbMessageHandlerMessages"]} />
    <Node n={[732, 131 + d, 204, 87, "nBlue", 35, title, sub]} />
    <Node n={[774, 422 + d, 90, 62, "nGreen", 20, "Append"]} />
    {[131, 338].map((y) => (
      <g key={y}>
        <Node n={[990, y + d, 246, 119, "nBlue", 36, "Serialize Render Property Result Message", "Target is ESB Message Handler"]} />
        <Node n={[1272, y + 12 + d, 219, 71, "nSlate", 18, "Call On Esb Message Handler Result"]} />
        <rect x="1479" y={y + 9 + d} width="14" height="12" fill="#d9e8f4" />
        <Exec x={1002} y={y + 45 + d} />
        <Pin x={1003} y={y + 61 + d} c={CY} />
        <Pin x={1003} y={y + 77 + d} c="#0f6b58" o />
        <Pin x={1003} y={y + 91 + d} c="#0f6b58" o />
        <Pin x={1003} y={y + 108 + d} c={MG} />
        <Exec x={1224} y={y + 45 + d} />
        <Pin x={1222} y={y + 60 + d} c={MG} />
        <path d={`M1236 ${y + 50 + d}L1272 ${y + 57 + d}`} stroke="#2594c8" strokeWidth="7" />
        <path d={`M1236 ${y + 62 + d}L1272 ${y + 71 + d}`} stroke={MG} strokeWidth="7" />
        <Exec x={1284} y={y + 42 + d} />
        <Pin x={1285} y={y + 58 + d} c={CY} />
        <Pin x={1285} y={y + 73 + d} c={MG} />
        <Exec x={1477} y={y + 42 + d} hollow />
        <path d={`M1234 ${y + 45 + d}L1276 ${y + 42 + d}`} stroke="#fff" strokeWidth="8" />
      </g>
    ))}
    <g fill="none" stroke="#fff" strokeLinecap="round">
      <path d={`M656 ${173 + d}L740 ${175 + d}M932 ${176 + d}H998`} strokeWidth="8" />
      <path d={`M654 ${192 + d}C800 ${190 + d} 850 ${385 + d} 1000 ${381 + d}`} strokeWidth="9" />
    </g>
    <path d={`M664 ${209 + d}L732 ${196 + d}`} stroke="#2079c8" strokeWidth="7" />
    <Exec x={484} y={173 + d} />
    <Pin x={485} y={189 + d} c={CY} />
    <Exec x={651} y={173 + d} />
    <Exec x={651} y={191 + d} />
    <Pin x={649} y={209 + d} c={CY} />
    <Exec x={743} y={176 + d} />
    <Pin x={744} y={192 + d} c={CY} />
    <Exec x={922} y={176 + d} />
    <Pin x={485} y={333 + d} c="#1766c0" />
    <Pin x={682} y={333 + d} c={MG} />
    <Pin x={682} y={348 + d} c={MG} />
    <Pin x={787} y={451 + d} c={MG} o />
    <Pin x={787} y={467 + d} c={MG} />
    <Pin x={850} y={452 + d} c={MG} />
    <text x="806" y={477 + d} fontSize="10" fill="#d0d0d0">Add pin +</text>
    <rect x="582" y={364 + d} width="6" height="2" fill="#ddd" />
    <Pill x={474} y={262 + d} />
    <Pill x={474} y={285 + d} deep />
    <Pill x={990} y={100 + d} w={90} />
    <Pill x={990} y={306 + d} w={90} />
  </g>
);

const Canvas = () => (
  <svg viewBox="380 556 1149 385" className="absolute inset-0 h-full w-full" fontFamily="Roboto, sans-serif">
    <defs>
      <pattern id="minor" x="688.300" y="633.300" width="14.375" height="14.375" patternUnits="userSpaceOnUse">
        <path d="M0 .5H15M.5 0V15" stroke="#353535" strokeWidth="1" />
      </pattern>
      <pattern id="minorL" x="688.300" y="633.300" width="14.375" height="14.375" patternUnits="userSpaceOnUse">
        <path d="M0 .5H15M.5 0V15" stroke="#fff" strokeOpacity=".1" strokeWidth="1" />
      </pattern>
      <pattern id="major" x="688.300" y="633.300" width="115" height="115" patternUnits="userSpaceOnUse">
        <path d="M0 .5H115M.5 0V115" stroke="#000" strokeOpacity=".7" strokeWidth="1" />
      </pattern>
      {[
        ["nRed", "#a01c1c", "#3a1010"],
        ["nTeal", "#14706e", "#123c3c"],
        ["nBlue", "#3f6f8c", "#16313f"],
        ["nNavy", "#1c4690", "#12244a"],
        ["nGreen", "#5a8a58", "#223822"],
        ["nSlate", "#4c6f86", "#25485e"],
      ].map(([id, a, b]) => (
        <linearGradient key={id} id={id} x1="0" y1="0" x2="1" y2="1">
          <stop offset="0" stopColor={a} />
          <stop offset="1" stopColor={b} />
        </linearGradient>
      ))}
      <linearGradient id="vg" x1="0" y1="0" x2="0" y2="1">
        <stop offset="0" stopColor="#000" stopOpacity=".25" />
        <stop offset=".15" stopColor="#000" stopOpacity="0" />
        <stop offset=".85" stopColor="#000" stopOpacity="0" />
        <stop offset="1" stopColor="#000" stopOpacity=".25" />
      </linearGradient>
    </defs>
    <rect x="380" y="556" width="1149" height="385" fill="#262626" />
    <rect x="380" y="556" width="1149" height="385" fill="url(#minor)" />
    <rect x="380" y="556" width="1149" height="385" fill="url(#major)" />
    <rect x="678" y="610" width="495" height="325.500" fill="#646464" />
    <rect x="678" y="618" width="495" height="317.500" fill="url(#minorL)" />
    <rect x="678" y="618" width="495" height="317.500" fill="url(#major)" opacity=".45" />
    <rect x="678" y="610" width="495" height="8" fill="#a2a2a2" />
    <text x="681" y="616" fontSize="4.500" fill="#d8d8d8">Overrides</text>
    <rect x="380" y="556" width="1149" height="385" fill="url(#vg)" />
    <text x="1228" y="915" fontSize="61.500" fontWeight="bold" fill="#5a5a5a" stroke="#5a5a5a" strokeWidth=".8" textLength="290" lengthAdjust="spacingAndGlyphs">BLUEPRINT</text>
    <g transform="translate(675 590) scale(.33333)">
      <path d="M250 193C330 193 360 200 474 203H650" stroke="#1d55b8" strokeWidth="6" fill="none" />
      <Node n={[41, 132, 211, 71, "nRed", 33, "Event Set Color", "From Esb Render Property Interface"]} />
      <Chain d={0} title="Set Clear Color" sub="Target is BP Play Area Clear Color" />
      <path d="M248 175L480 173" stroke="#fff" strokeWidth="8" />
      <Exec x={240} y={176} />
      <Pin x={238} y={192} c="#1766c0" />
      <Pin x={244} y={149} c="#e02020" o />
      <path d="M246 137l10-8M246 129l10 8" stroke="#bfe6ff" strokeWidth="4" />
      <Pill x={474} y={91} />
      <Pill x={474} y={112} />
      <circle cx="561" cy="108" r="4" fill="#fff" />
    </g>
    <g transform="translate(675 760) scale(.33333)">
      <path d="M330 124l-12 16" stroke="#2594c8" strokeWidth="5" />
      <Node n={[41, 141, 211, 70, "nRed", 32, "Event Set Visibility", "From Esb Render Property Interface"]} />
      <Node n={[258, 141, 174, 101, "nBlue", 34, "Set Visibility", "Target is Scene Component"]} />
      <Chain d={9} title="Set Collision Enabled" sub="Target is BP Play Area Clear Color" />
      <path d="M238 201L260 207 640 213 744 216" stroke="#7c1414" strokeWidth="5" fill="none" />
      <path d="M244 184h20M428 184L480 181" stroke="#fff" strokeWidth="8" />
      <Exec x={240} y={183} />
      <Exec x={268} y={183} />
      <Exec x={420} y={183} />
      <Pin x={238} y={201} c="#a01010" />
      <Pin x={268} y={201} c={CY} />
      <Pin x={268} y={216} c="#a01010" />
      <Pin x={268} y={232} c="#701010" o />
      <path d="M246 147l10-8M246 139l10 8" stroke="#bfe6ff" strokeWidth="4" />
      <Pill x={246} y={109} w={89} />
      <Pill x={474} y={88} />
      <Pill x={474} y={121} />
      <circle cx="561" cy="117" r="4" fill="#fff" />
      <path d="M1484 526l8-8M1488 527l5-5" stroke="#bbb" strokeWidth="2" />
    </g>
  </svg>
);

const Graph = () => (
  <div className="relative h-[389px] shrink-0 overflow-hidden border-2 border-[#3c3c3c]">
    <Canvas />
    <div className="absolute inset-x-0 top-0 h-[42px] bg-black/55" />
    <div className="absolute left-[298px] top-[18px] flex h-[27px] w-[75px] items-center justify-center rounded-[3px] border-b-[3px] border-[#d8d8d8] bg-gradient-to-b from-[#454545] to-[#757575] pt-[3px] text-[12.500px] tracking-[.4px] text-[#202020]">
      Overrides
    </div>
    <svg width="8" height="6" className="absolute left-[306px] top-[44px]">
      <path d="M0 0h8L4 6z" fill="#b8b8b8" />
    </svg>
    <div className="relative flex h-[42px] items-center pl-[7px] pr-[4px]">
      <svg width="20" height="20" viewBox="0 0 20 20">
        <path d="M10 1.500l2.500 6 6.300.5-4.800 4.200 1.500 6.300L10 15.200l-5.500 3.300L6 12.200 1.200 8l6.300-.5z" fill="none" stroke="#e6e6e6" strokeWidth="1.400" />
      </svg>
      <div className="ml-[6px] h-[36px] w-px bg-[#8a8a8a]" />
      <svg width="17" height="22" viewBox="0 0 17 22" className="mb-[3px] ml-[12px]">
        <path d="M0 11L9.500 0v5.500H17v11H9.500V22z" fill="#eef4f4" />
      </svg>
      <svg width="18" height="22" viewBox="0 0 17 22" className="mb-[3px] ml-[25px]">
        <path d="M17 11L7.500 0v5.500H0v11h7.500V22z" fill="#8d8d8d" />
      </svg>
      <div className="ml-[14px] h-[36px] w-px bg-[#8a8a8a]" />
      <span className="mb-[2px] ml-[11px] flex">
        <GraphIcon w={25} />
      </span>
      <span className="mb-[3px] ml-[14px] text-[19px] text-[#969696]">BP_ESB_ClearColor</span>
      <svg width="10" height="14" viewBox="0 0 10 14" className="ml-[8px]">
        <path d="M1 .5L8.500 7 1 13.500" fill="none" stroke="#f0f0f0" strokeWidth="1.600" />
      </svg>
      <span className="mb-[3px] ml-[9px] text-[19px] tracking-[.05px] text-[#969696]">Event Graph</span>
      <svg width="72" height="20" viewBox="0 0 72 20" className="mb-[3px] ml-auto">
        <text x="1" y="15" fontFamily="Roboto, sans-serif" fontSize="18" fontWeight="bold" fill="#363636" textLength="69" lengthAdjust="spacingAndGlyphs">
          Zoom -7
        </text>
      </svg>
    </div>
  </div>
);

const FindResults = () => (
  <div className="flex min-h-0 grow flex-col bg-[#3e3e3e] px-[2px] pb-[2px]">
    <div className="flex h-[25px] items-center">
      <SearchBox text="Enter function or event name to find references..." cls="w-[1118px] tracking-[.15px]" />
      <div className="ml-[4px] flex h-[20px] w-[24px] items-center justify-center rounded-[2px] bg-[#d4d4d4]">
        <svg width="14" height="13" viewBox="0 0 14 13">
          <path d="M2 1h3v2h4V1h3l2 7v4H9V7H5v5H0V8z" fill="#000" />
        </svg>
      </div>
    </div>
    <div className="grow border border-[#4a4a4a] bg-gradient-to-b from-[#060606] to-[#242424]" />
  </div>
);

/* ---------- details ---------- */

const Section = ({ title, children, pad = "pb-[13px]" }: { title: string; pad?: string } & Kids) => (
  <div className="shrink-0">
    <div className="flex h-[29px] items-center rounded-l-[3px] bg-[#2f2f2f] pl-[3px]">
      <Open />
      <span className={"ml-[4px] text-[13px] font-bold text-[#e6e6e6] " + shadow}>{title}</span>
    </div>
    <div className={pad}>{children}</div>
  </div>
);

const Row = ({ label, h, children, drop, arrow, icon }: { label: string; h: string; drop?: boolean; arrow?: boolean; icon?: React.ReactNode } & Kids) => (
  <div className={"flex items-center text-[11px] tracking-[.12px] text-[#d2d2d2] " + h}>
    <div className="flex h-full w-[126px] shrink-0 items-center overflow-hidden whitespace-nowrap pb-px">
      <span className="flex w-[16px] shrink-0 items-center pl-[4px]">{arrow && <Closed />}</span>
      {icon}
      <span className={icon ? "w-[88px] overflow-hidden leading-[14px]" : ""}>{label}</span>
      {drop && (
        <span className="ml-[4px] flex">
          <Caret w={8} />
        </span>
      )}
    </div>
    <div className="flex items-center pl-[4px]">{children}</div>
  </div>
);

const Check = ({ on }: { on?: boolean }) => (
  <span className={"ml-px flex h-[14px] w-[14px] items-center justify-center rounded-[2px] " + (on ? "bg-[#d6d6d6]" : "bg-[#a9a9a9]")}>
    {on && (
      <svg width="12" height="10" viewBox="0 0 12 10">
        <path d="M1.500 5l3 3 6-6.500" fill="none" stroke="#4c4c4c" strokeWidth="2.600" />
      </svg>
    )}
  </span>
);

const XYZ = ({ v }: { v: string }) => (
  <div className="flex gap-[2.500px]">
    {[
      ["X", "bg-[#c42a0c]"],
      ["Y", "bg-[#62a004]"],
      ["Z", "bg-[#2a6fd6]"],
    ].map(([a, c]) => (
      <div key={a} className={"flex h-[17px] w-[63px] items-center rounded-[2px] " + c}>
        <span className="w-[11px] shrink-0 text-center text-[12px] tracking-[0px] text-[#f0f0f0]">{a}</span>
        <span className="flex h-[17px] grow items-center rounded-[3px] bg-[#d8d8d8] pl-[8px] pr-[6px] text-[11px] tracking-[.2px] text-[#222]">
          {v}
          <span className="ml-auto flex">
            <DragIcon />
          </span>
        </span>
      </div>
    ))}
  </div>
);

const Expander = () => (
  <div className="mt-[2px] flex h-[14px] w-[365px] shrink-0 justify-center border-t border-[#333] bg-[#484848] pr-[3px] pt-[2px]">
    <svg width="10" height="8" viewBox="0 0 10 8">
      <path d="M0 0h10v1.300H0zM0 2.500h10L5 7.500z" fill="#dedede" />
    </svg>
  </div>
);

const Diamond = () => (
  <svg width="15" height="15" viewBox="0 0 15 15" className="mr-[6px] shrink-0">
    <path d="M7.500 1L14 7.500 7.500 14 1 7.500z" fill="none" stroke="#e4e4e4" strokeWidth="1.500" />
    <path d="M7.500 1v3.500l-2.500 3 2.500 3V14L1 7.500z" fill="#e4e4e4" />
  </svg>
);

const SGlass = () => <Glass s={12} c="#c8c8c8" sw={1.800} />;

const Details = () => (
  <div className="flex w-[379px] shrink-0 flex-col">
    <div className="flex pl-[4px]">
      <Tab
        label="Details"
        icon={
          <svg width="16" height="16" viewBox="0 0 16 16">
            <path d="M10 10l5 5" stroke="#4a66b8" strokeWidth="2.600" />
            <circle cx="7" cy="7" r="6" fill="#2c3444" stroke="#6c86c8" strokeWidth="1.300" />
            <path d="M6 6h2v4h1M5.500 10h3.500M6.500 3h1.300v1.500H6.500z" stroke="#fff" fill="#fff" />
          </svg>
        }
      />
    </div>
    <div className="flex min-h-0 grow flex-col bg-[#3e3e3e]">
      <div className="flex h-[26px] shrink-0 items-center pl-[4px] pt-px">
        <SearchBox text="Search Details" cls="w-[304px]" />
        <span className="ml-[9px] flex h-[22px] w-[26px] items-center justify-center border border-[#eee] bg-[#c0c0c0]">
          <svg width="14" height="14" viewBox="0 0 14 14">
            <path d="M0 1.500h4M5 1.500h4M10 1.500h4M0 4.500h4M5 4.500h4M10 4.500h4M0 7.500h4M5 7.500h4M10 7.500h4M0 10.500h4M5 10.500h4M10 10.500h4M0 13h4M5 13h4M10 13h4" stroke="#5a5a5a" strokeWidth="1.800" />
          </svg>
        </span>
        <span className="ml-[4px] flex">
          <Eye />
        </span>
        <span className="ml-[4px] flex">
          <Caret w={8} />
        </span>
      </div>
      <div className="relative flex min-h-0 grow">
        <div className="flex w-[365px] flex-col overflow-hidden pl-[2px] pt-0">
          <Section title="Variable">
            <Row label="Variable Name" h="h-[22px]">
              <span className="ml-px flex h-[15px] w-[123px] items-center bg-[#7b7b7b] pl-[4px] text-[#cfcfcf]">ChildActorComponent</span>
            </Row>
            <Row label="Tooltip" h="h-[22px]">
              <span className="h-[17px] w-[125px] rounded-[3px] bg-[#d8d8d8]" />
            </Row>
            <Row label="Category" h="h-[26px]">
              <span className="ml-px flex h-[19px] w-[123px] items-center justify-between border border-[#929292] bg-[#7a7a7a] pl-[5px] text-[#222]">
                ESB Messaging
                <span className="flex h-full w-[23px] items-center justify-center bg-[#6e6e6e]">
                  <Caret c="#151515" w={9} />
                </span>
              </span>
            </Row>
            <Row label="Editable when Inherite" h="h-[24px]">
              <Check on />
            </Row>
          </Section>
          <Section title="Transform" pad="pb-[12px]">
            <Row label="Location" h="h-[24px]" drop>
              <XYZ v="0.0" />
            </Row>
            <Row label="Rotation" h="h-[24px]" drop>
              <XYZ v="0.0 °" />
            </Row>
            <Row label="Scale" h="h-[24px]" drop>
              <XYZ v="0.01" />
              <svg width="13" height="15" viewBox="0 0 13 15" className="ml-[4px]">
                <path d="M1 9V4a2.500 2.500 0 0 1 5 0v5" fill="none" stroke="#8a8a8a" strokeWidth="1.600" />
                <path d="M3 8h10v6.500H3z" fill="#a2a2a2" />
                <path d="M8 9.500v3.500" stroke="#444" strokeWidth="1.500" />
              </svg>
              <span className="ml-[5px] flex">
                <Reset />
              </span>
            </Row>
            <Row label="Mobility" h="h-[26px]">
              <div className="flex h-[20px] w-[214px] overflow-hidden rounded-[8px] bg-[#575757] text-[11px] text-[#d0d0d0]">
                <span className="flex w-[71px] items-center border-r border-[#3a3a3a] pl-[8px]">
                  <span className="h-[8px] w-[8px] rounded-[2px] bg-white" />
                  <span className="ml-[17px]">Static</span>
                </span>
                <span className="flex w-[72px] items-center pl-[8px]">
                  <svg width="12" height="14" viewBox="0 0 12 14">
                    <path d="M3 0v14M9 0v14" stroke="#ddd" strokeDasharray="3 1" />
                    <path d="M.5 8h5v3h-5zM6.500 3h5v3h-5z" fill="#fff" />
                  </svg>
                  <span className="ml-[10px] tracking-[.2px]">Station</span>
                </span>
                <span className="flex w-[71px] items-center bg-[#c08a0c] pl-[5px] text-[#1c1c1c]">
                  <svg width="15" height="15" viewBox="0 0 15 15">
                    <path d="M7.500.7l3 3h-6zM7.500 14.300l3-3h-6zM.7 7.500l3-3v6zM14.300 7.500l-3-3v6z" fill="#fff" stroke="#fff" strokeWidth=".6" />
                    <rect x="3.500" y="3.500" width="8" height="8" rx="3" fill="#c08a0c" stroke="#fff" strokeWidth="1.300" />
                  </svg>
                  <span className="ml-[10px] tracking-[.3px]">Movab</span>
                </span>
              </div>
            </Row>
          </Section>
          <Section title="Sockets">
            <Row label="Parent Socket" h="h-[28px]">
              <span className="ml-px h-[21px] w-[75px] bg-[#777]" />
              <span className="ml-[7px] flex">
                <SGlass />
              </span>
              <span className="ml-[13px] flex">
                <Cross />
              </span>
            </Row>
          </Section>
          <Section title="Child Actor Component" pad="pb-[2px]">
            <Row label="Child Actor Class" h="h-[28px]">
              <span className="ml-px flex h-[20px] w-[112px] items-center rounded-[1px] border border-[#f0f0f0] bg-gradient-to-b from-[#e4e4e4] to-[#b0b0b0] pl-[3px] text-[11px] tracking-[.05px] text-black">
                <span className="whitespace-nowrap">BP_PlayArea_Clear</span>
                <span className="ml-[2px] flex">
                  <Caret c="#000" w={8} />
                </span>
              </span>
              <svg width="12" height="12" viewBox="0 0 12 12" className="ml-[11px]">
                <path d="M0 6l6-5.500V4h6v4H6v3.500z" fill="#e8e8e8" />
              </svg>
              <span className="ml-[12px] flex">
                <SGlass />
              </span>
              <span className="ml-[12px] flex">
                <Plus s={11} c="#e8e8e8" />
              </span>
              <span className="ml-[13px] flex">
                <Cross />
              </span>
              <span className="ml-[10px] flex">
                <Reset />
              </span>
            </Row>
            <Row label="Child Actor Template" h="h-[26px]" arrow>
              <span className="flex h-[20px] w-[153px] items-center rounded-[2px] bg-[#484848] pl-[2px] text-[11px] text-[#7c7c7c]">
                <span className="whitespace-nowrap">BP_PlayArea_ClearColor-1</span>
                <span className="ml-auto mr-[3px] flex">
                  <Caret c="#777" w={8} />
                </span>
              </span>
              <span className="ml-[10px] flex">
                <SGlass />
              </span>
              <svg width="12" height="12" viewBox="0 0 12 12" className="ml-[13px]">
                <path d="M0 12l1-3 5-5 2 2-5 5zM6 2l4 4 1-1-1-1 2-2-2-2-2 2-1-1z" fill="#858585" />
              </svg>
            </Row>
          </Section>
          <Section title="Rendering" pad="">
            <Row label="Visible" h="h-[24px]">
              <Check on />
            </Row>
            <Row label="Hidden in Game" h="h-[24px]">
              <Check />
            </Row>
            <Expander />
          </Section>
          <Section title="Component Tick" pad="">
            <Row label="Start with Tick Enable" h="h-[24px]">
              <Check on />
            </Row>
            <Row label="Tick Interval (secs)" h="h-[24px]">
              <span className="flex h-[17px] w-[105px] items-center justify-between rounded-[3px] bg-[#d8d8d8] pl-[4px] pr-[6px] text-[#222]">
                0.0
                <DragIcon />
              </span>
            </Row>
            <Expander />
          </Section>
          <Section title="Tags">
            <Row label="Component Tags" h="h-[28px]">
              <span className="w-[108px] pl-[4px]">0 Array elements</span>
              <span className="ml-[4px] flex">
                <Plus s={11} c="#e8e8e8" />
              </span>
              <svg width="10" height="12" viewBox="0 0 10 12" className="ml-[14px]">
                <path d="M0 1h3V0h4v1h3v1.500H0zM.8 3.500h8.400L8.500 12h-7z" fill="#dcdcdc" />
                <path d="M3 5v5.500M5 5v5.500M7 5v5.500" stroke="#444" />
              </svg>
            </Row>
          </Section>
          <Section title="Component Replication">
            <Row label="Component Replicates" h="h-[24px]">
              <Check />
            </Row>
          </Section>
          <Section title="Cooking">
            <Row label="Is Editor Only" h="h-[24px]">
              <Check />
            </Row>
          </Section>
          <Section title="Events">
            {["Physics Volume C", "On Component Ac", "On Component De"].map((e) => (
              <Row key={e} label={e} h="h-[25px]" icon={<Diamond />}>
                <span className="flex h-[20px] w-[150px] items-center justify-center border border-[#66b466] bg-[#50a550]">
                  <Plus />
                </span>
              </Row>
            ))}
          </Section>
          <div className="h-[29px] shrink-0 rounded-l-[3px] bg-[#2f2f2f]" />
        </div>
        <div className="absolute left-[128px] top-0 h-full w-px bg-black/35" />
        <div className="ml-[2px] mt-[3px] h-[920px] w-[10px] bg-white" />
      </div>
    </div>
  </div>
);

/* ---------- page ---------- */

export default function App() {
  return (
    <div className="flex h-[1037px] w-[1919px] flex-col overflow-hidden bg-[#222222] font-[Roboto,'Liberation_Sans',sans-serif] leading-none">
      <TitleBar />
      <MenuBar />
      <div className="mt-px flex min-h-0 grow">
        <div className="flex w-[378px] shrink-0 flex-col">
          <Components />
          <MyBlueprint />
        </div>
        <div className="flex w-[1153px] shrink-0 flex-col">
          <Toolbar />
          <div className="mt-[4px] flex pl-[4px]">
            <Tab
              label="Viewport"
              icon={
                <svg width="14" height="14" viewBox="0 0 14 14">
                  <path d="M0 0h6.500v6.500H0zM7.500 7.500H14V14H7.500zM0 7.500h6.500V14H0z" fill="#8fa6d0" />
                  <path d="M7.500 0H14v6.500H7.500z" fill="#dfeaff" />
                </svg>
              }
            />
            <Tab label="Construction Scrip" active={false} icon={<FnIcon s={17} />} />
          </div>
          <Viewport />
          <div className="mt-[5px] flex pl-[4px]">
            <Tab label="Event Graph" icon={<GraphIcon w={16} />} />
          </div>
          <Graph />
          <div className="mt-[5px] flex pl-[4px]">
            <Tab
              label="Compiler Results"
              active={false}
              icon={
                <svg width="15" height="15" viewBox="0 0 15 15">
                  <path d="M1 1h10l3 3v10H1z" fill="#e8ecf4" />
                  <path d="M3 3l5 4-5 4M8 12h5" stroke="#2c4a8c" strokeWidth="1.800" fill="none" />
                </svg>
              }
            />
            <Tab
              label="Find Results"
              icon={
                <svg width="16" height="15" viewBox="0 0 16 15">
                  <circle cx="9" cy="6" r="5" fill="#777" stroke="#e4e8f4" strokeWidth="1.600" />
                  <path d="M5.500 10L1.500 14" stroke="#8fa0cc" strokeWidth="2.600" />
                </svg>
              }
            />
          </div>
          <FindResults />
        </div>
        <div className="ml-[5px] flex">
          <Details />
        </div>
      </div>
    </div>
  );
}
